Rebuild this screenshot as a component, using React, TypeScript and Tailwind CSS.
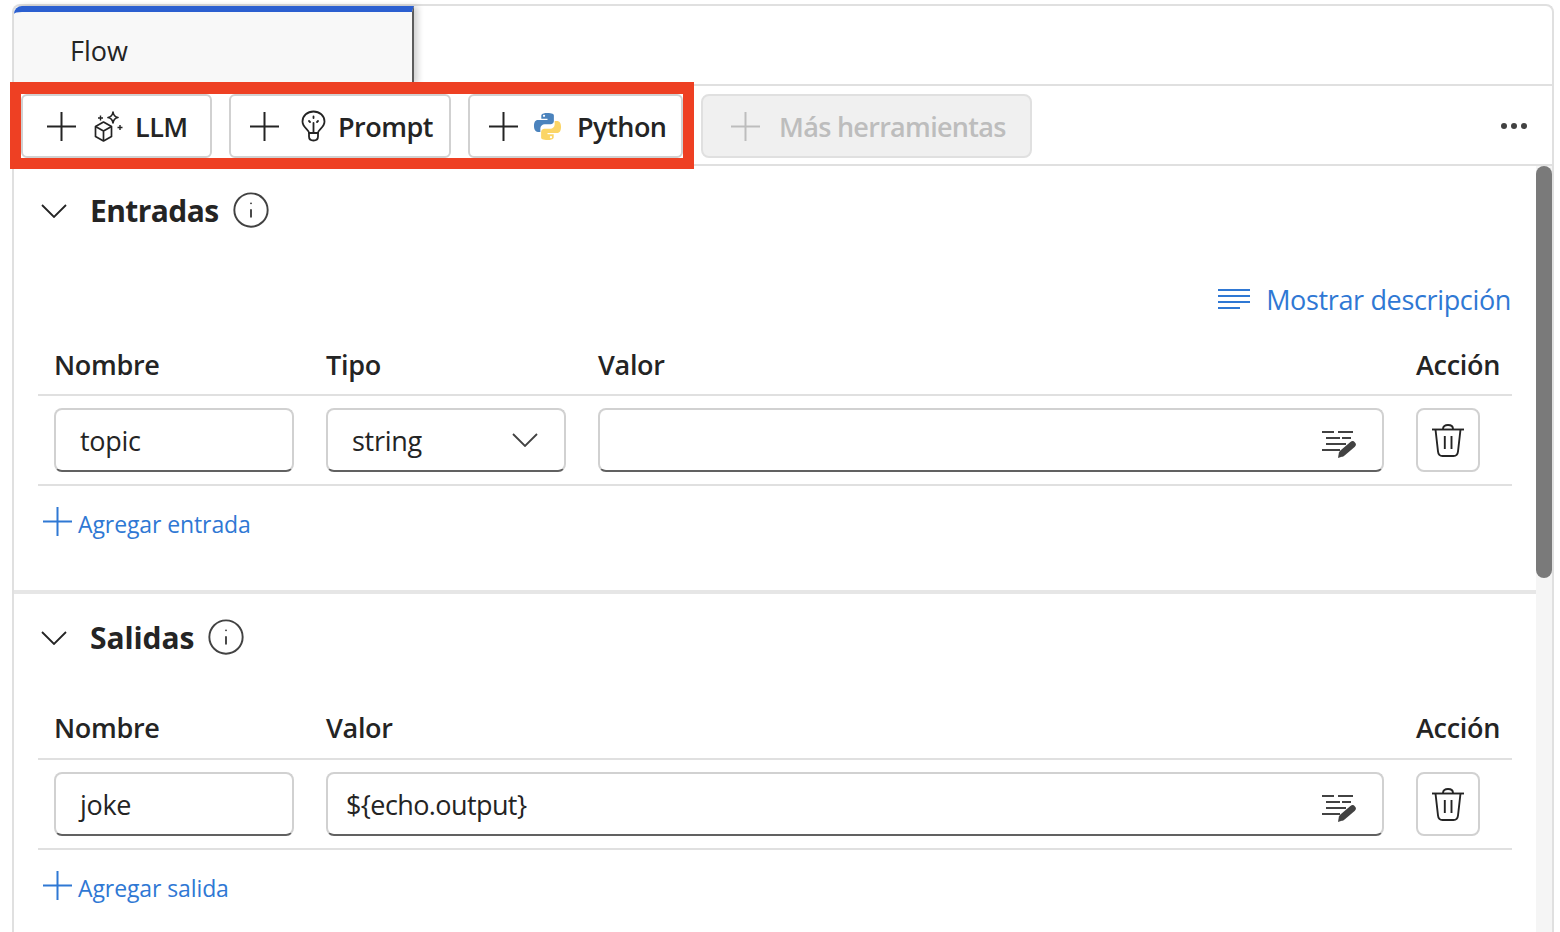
import { Info } from "lucide-react";

const font = "font-['Open_Sans','Noto_Sans',sans-serif]";

function PlusIcon({ size = 29, color = "#242424" }: { size?: number; color?: string }) {
  return (
    <svg width={size} height={size} viewBox="0 0 29 29" fill="none" stroke={color} strokeWidth="2" className="shrink-0">
      <path d="M14.5 0 V29 M0 14.5 H29" />
    </svg>
  );
}

function Chevron({ color = "#242424" }: { color?: string }) {
  return (
    <svg width="26" height="14" viewBox="0 0 26 14" fill="none" stroke={color} strokeWidth="1.8" className="shrink-0">
      <path d="M1 1 L13 13 L25 1" />
    </svg>
  );
}

function CubeSparkIcon() {
  return (
    <svg width="29" height="31" viewBox="0 0 29 31" fill="none" stroke="#242424" strokeWidth="1.7" className="block">
      <path d="M1.5 15.5 L9.5 11 L17.5 15.5 V25.5 L9.5 30 L1.5 25.5 Z" strokeLinejoin="round" />
      <path d="M1.5 15.5 L9.5 20 L17.5 15.5 M9.5 20 V30" strokeLinejoin="round" />
      <path d="M19 1 C19.5 4.5 20.5 6 24 6.5 C20.5 7 19.5 8.5 19 12 C18.5 8.5 17.5 7 14 6.5 C17.5 6 18.5 4.5 19 1 Z" strokeLinejoin="round" />
      <path d="M6.5 4.5 V9.5 M4 7 H9" strokeWidth="1.4" />
      <path d="M26 14 V19 M23.5 16.5 H28.5" strokeWidth="1.4" />
    </svg>
  );
}

function BulbIcon() {
  return (
    <svg width="25" height="32" viewBox="0 0 25 32" fill="none" stroke="#242424" strokeWidth="1.8" strokeLinecap="round" className="block">
      <path d="M8 23 C8 19.5 1.5 17.5 1.5 11.5 C1.5 5.5 6.5 1.5 12.5 1.5 C18.5 1.5 23.5 5.5 23.5 11.5 C23.5 17.5 17 19.5 17 23 Z" strokeLinejoin="round" />
      <path d="M8 23 V26.5 C8 29 10 30.5 12.5 30.5 C15 30.5 17 29 17 26.5 V23" />
      <path d="M12.5 23 V13 M8 11 L9 12 M17 11 L16 12 M12.5 6.5 V8" />
    </svg>
  );
}

function PythonIcon() {
  return (
    <svg width="29" height="29" viewBox="0 0 30 30" className="block">
      <path d="M14.6 1 C8.5 1 8.6 3.6 8.6 3.6 V7 H15 V8.4 H5 C2.4 8.4 1 10.8 1 14.6 C1 18.4 2.8 20.6 5 20.6 H7.6 V17 C7.6 14.4 9.8 12.6 12 12.6 H18.2 C20.2 12.6 21.6 11 21.6 9.2 V3.6 C21.6 2 20 1 14.6 1 Z" fill="#4b83bd" />
      <circle cx="11.4" cy="4" r="1.2" fill="#fff" />
      <path d="M15.4 29 C21.5 29 21.4 26.4 21.4 26.4 V23 H15 V21.6 H25 C27.6 21.6 29 19.2 29 15.4 C29 11.6 27.2 9.4 25 9.4 H22.4 V13 C22.4 15.6 20.2 17.4 18 17.4 H11.8 C9.8 17.4 8.4 19 8.4 20.8 V26.4 C8.4 28 10 29 15.4 29 Z" fill="#fbd566" />
      <circle cx="18.6" cy="26" r="1.2" fill="#fff" />
    </svg>
  );
}

function FormatPenIcon() {
  return (
    <svg width="34" height="29" viewBox="0 0 34 29" fill="none" className="shrink-0 mt-[7px]">
      <path d="M0 3 H12 M16 3 H31 M4 9 H18 M20 9 H29 M4 15 H24 M0 21 H18" stroke="#424242" strokeWidth="2" />
      <path d="M20.5 24 L30.5 15.5" stroke="#424242" strokeWidth="6.5" strokeLinecap="round" />
      <path d="M16 29 L17 23 L22 27 Z" fill="#424242" />
    </svg>
  );
}

function TrashIcon() {
  return (
    <svg width="32" height="33" viewBox="0 0 32 33" fill="none" stroke="#242424" strokeWidth="1.9">
      <path d="M0 5.5 H32" />
      <path d="M11 5 C11 2.5 13 1 16 1 C19 1 21 2.5 21 5" />
      <path d="M3.5 5.5 L6 27.5 C6.3 30.5 8 32 10.5 32 H21.5 C24 32 25.7 30.5 26 27.5 L28.5 5.5" />
      <path d="M12.8 12 V25 M19.5 12 V25" />
    </svg>
  );
}

function ToolButton({ icon, label, className }: { icon: React.ReactNode; label: string; className: string }) {
  return (
    <button className={`h-[64px] shrink-0 flex items-center bg-white border-2 border-[#d1d1d1] rounded-md text-[#242424] text-[27px] tracking-[-0.5px] font-semibold ${className}`}>
      <PlusIcon />
      {icon}
      <span className="pt-[2px]">{label}</span>
    </button>
  );
}

function SectionTitle({ title, tracking }: { title: string; tracking: string }) {
  return (
    <div className="flex items-center h-[40px] pl-[27px]">
      <Chevron />
      <span className={`ml-[23px] text-[30px] font-bold text-[#242424] leading-none ${tracking}`}>{title}</span>
      <Info size={40} strokeWidth={1.15} color="#424242" className="ml-[12px] -mt-[2px]" />
    </div>
  );
}

function TextField({ value, className, tracking = "tracking-[-0.3px]", children }: { value: string; className: string; tracking?: string; children?: React.ReactNode }) {
  return (
    <div className={`h-[64px] flex items-center justify-between bg-white border-2 border-[#d1d1d1] border-b-[#616161] rounded-lg text-[27px] text-[#242424] ${tracking} ${className}`}>
      <span className="pt-[2px]">{value}</span>
      {children}
    </div>
  );
}

function DeleteButton() {
  return (
    <button className="w-[64px] h-[64px] flex items-center justify-center border-2 border-[#d1d1d1] rounded-lg bg-white">
      <TrashIcon />
    </button>
  );
}

function AddLink({ label }: { label: string }) {
  return (
    <div className="flex items-center pl-[29px] pt-[22px] text-[#2f78d4] text-[23px] tracking-[-0.1px] leading-[32px]">
      <span className="-mt-[6px]"><PlusIcon color="#2f78d4" /></span>
      <span className="ml-[6px]">{label}</span>
    </div>
  );
}

export default function App() {
  return (
    <div className={`w-[1560px] h-[932px] overflow-hidden bg-white pt-1 pl-3 ${font}`}>
      <div className="w-[1542px] h-[940px] border-2 border-b-0 border-[#e0e0e0] rounded-t-lg relative">
        {/* tab strip */}
        <div className="h-[80px] border-b-2 border-[#e0e0e0]">
          <div className="w-[400px] h-[78px] bg-[#f8f8f8] border-t-[6px] border-t-[#2b5fd0] border-r-2 border-r-[#5c5c5c] rounded-tl-lg shadow-[4px_0_6px_rgba(0,0,0,0.18)] flex items-center pl-[56px] pt-[6px] text-[27px] text-[#242424]">
            Flow
          </div>
        </div>

        {/* toolbar */}
        <div className="h-[80px] border-b-2 border-[#e0e0e0] flex items-start pt-[8px] pl-[7px] pr-[25px]">
          <ToolButton className="w-[191px] pl-[24px]" label="LLM" icon={<span className="ml-[18px] mr-[12px]"><CubeSparkIcon /></span>} />
          <ToolButton className="w-[222px] ml-[17px] pl-[19px]" label="Prompt" icon={<span className="ml-[22px] mr-[12px]"><BulbIcon /></span>} />
          <ToolButton className="w-[215px] ml-[17px] pl-[19px]" label="Python" icon={<span className="ml-[15px] mr-[15px]"><PythonIcon /></span>} />
          <button className="w-[331px] h-[64px] ml-[18px] pl-[28px] flex items-center gap-[19px] bg-[#f0f0f0] border-2 border-[#e0e0e0] rounded-lg text-[#bdbdbd] text-[27px] tracking-[-0.7px] font-semibold">
            <PlusIcon color="#bdbdbd" />
            <span className="pt-[2px]">Más herramientas</span>
          </button>
          <div className="ml-auto mt-[29px] flex gap-[4px]">
            <i className="w-[6px] h-[6px] rounded-full bg-[#424242]" />
            <i className="w-[6px] h-[6px] rounded-full bg-[#424242]" />
            <i className="w-[6px] h-[6px] rounded-full bg-[#424242]" />
          </div>
        </div>

        {/* scrolling content */}
        <div className="flex">
          <div className="w-[1522px]">
            <section className="h-[428px] border-b-4 border-[#e6e6e6]">
              <div className="pt-[25px]">
                <SectionTitle title="Entradas" tracking="tracking-[-0.6px]" />
              </div>
              <div className="mt-[54px] mr-[25px] h-[28px] flex justify-end items-center text-[27px] tracking-[-0.35px] text-[#2f78d4] leading-none">
                <svg width="32" height="20" viewBox="0 0 32 20" className="mr-[16px]" stroke="#2f78d4" strokeWidth="2">
                  <path d="M0 1 H32 M0 7 H32 M0 13 H32 M0 19 H22" />
                </svg>
                Mostrar descripción
              </div>
              <div className="mx-[24px] mt-[38px]">
                <div className="h-[45px] flex items-start border-b-2 border-[#e0e0e0] text-[27px] tracking-[-0.3px] font-semibold text-[#242424] leading-none pl-[16px]">
                  <span className="w-[272px]">Nombre</span>
                  <span className="w-[272px]">Tipo</span>
                  <span className="w-[818px]">Valor</span>
                  <span>Acción</span>
                </div>
                <div className="h-[90px] flex items-start pt-[12px] pl-[16px] border-b-2 border-[#e0e0e0]">
                  <TextField value="topic" className="w-[240px] pl-[24px]" />
                  <TextField value="string" className="w-[240px] ml-[32px] pl-[24px] pr-[26px]">
                    <Chevron color="#424242" />
                  </TextField>
                  <TextField value="" className="w-[786px] ml-[32px] pr-[26px]">
                    <FormatPenIcon />
                  </TextField>
                  <div className="ml-[32px]"><DeleteButton /></div>
                </div>
                <div className="-ml-[24px]"><AddLink label="Agregar entrada" /></div>
              </div>
            </section>

            <section className="pt-[24px]">
              <SectionTitle title="Salidas" tracking="tracking-[-0.1px]" />
              <div className="mx-[24px] mt-[56px]">
                <div className="h-[46px] flex items-start border-b-2 border-[#e0e0e0] text-[27px] tracking-[-0.3px] font-semibold text-[#242424] leading-none pl-[16px]">
                  <span className="w-[272px]">Nombre</span>
                  <span className="w-[1090px]">Valor</span>
                  <span>Acción</span>
                </div>
                <div className="h-[90px] flex items-start pt-[12px] pl-[16px] border-b-2 border-[#e0e0e0]">
                  <TextField value="joke" className="w-[240px] pl-[24px]" />
                  <TextField value="${echo.output}" tracking="tracking-[-0.6px]" className="w-[1058px] ml-[32px] pl-[18px] pr-[26px]">
                    <FormatPenIcon />
                  </TextField>
                  <div className="ml-[32px]"><DeleteButton /></div>
                </div>
                <div className="-ml-[24px]"><AddLink label="Agregar salida" /></div>
              </div>
            </section>
          </div>

          {/* scrollbar */}
          <div className="w-[16px] h-[780px] bg-[#f5f5f5]">
            <div className="h-[412px] bg-[#7a7a7a] rounded-full" />
          </div>
        </div>

        {/* red highlight drawn over the toolbar buttons */}
        <div className="absolute left-[-4px] top-[76px] w-[684px] h-[87px] border-[11px] border-t-[12px] border-[#ee4023] pointer-events-none" />
      </div>
    </div>
  );
}
